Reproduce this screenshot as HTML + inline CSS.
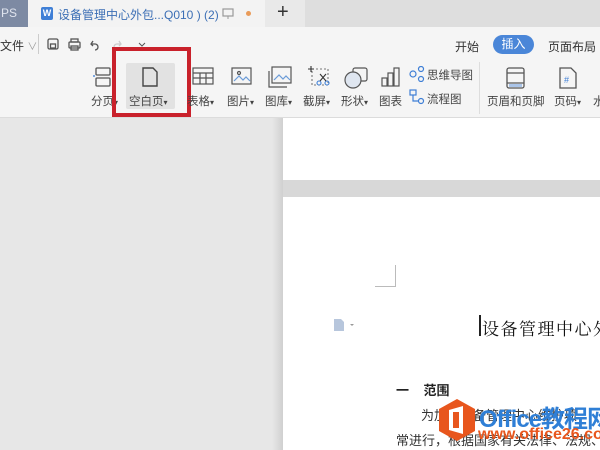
<!DOCTYPE html>
<html><head><meta charset="utf-8"><style>
*{margin:0;padding:0;box-sizing:border-box}
body{width:600px;height:450px;overflow:hidden;position:relative;background:#e7e7e7;font-family:"Liberation Sans","Noto Sans CJK SC",sans-serif;color:#444}
.a{position:absolute;white-space:nowrap}
.lbl{font-size:11.5px;color:#444}
.ic{position:absolute}
</style></head><body>
<div class="a" style="left:0;top:0;width:600px;height:27px;background:#dedede"></div>
<div class="a" style="left:0;top:0;width:28px;height:27px;background:#7d8aa3;color:#dfe4ee;font-size:12px;line-height:27px;padding-left:1px">PS</div>
<div class="a" style="left:28px;top:0;width:237px;height:27px;background:#f3f3f3"></div>
<div class="a" style="left:41px;top:7px;width:12px;height:13px;background:#3f7fd6;border-radius:2px;color:#fff;font-size:9px;line-height:13px;text-align:center;font-weight:bold">W</div>
<div class="a" style="left:58px;top:6px;font-size:12px;color:#3c6fb5">设备管理中心外包...Q010 ) (2)</div>
<svg class="ic" style="left:222px;top:8px" width="12" height="12"><rect x="1" y="1" width="10" height="7" fill="none" stroke="#999" stroke-width="1.2"/><line x1="6" y1="8" x2="6" y2="11" stroke="#999"/></svg>
<div class="a" style="left:246px;top:11px;width:5px;height:5px;border-radius:50%;background:#e99b59"></div>
<div class="a" style="left:265px;top:0;width:40px;height:27px;background:#e9e9e9"></div>
<div class="a" style="left:277px;top:1px;font-size:20px;color:#333">+</div>
<div class="a" style="left:0;top:27px;width:600px;height:91px;background:#f5f5f5;border-bottom:1px solid #dcdcdc"></div>
<div class="a" style="left:0;top:37px;font-size:12px;color:#333">文件 <span style="color:#999;font-size:10px">∨</span></div>
<div class="a" style="left:38px;top:34px;width:1px;height:20px;background:#ccc"></div>
<svg class="ic" style="left:46px;top:37px" width="100" height="14" fill="none" stroke="#555" stroke-width="1.3"><rect x="2" y="2" width="10" height="10" rx="1.5"/><rect x="4.5" y="7" width="5" height="4"/><rect x="23" y="5" width="11" height="6" rx="1"/><rect x="25" y="2" width="7" height="3"/><rect x="25" y="9" width="7" height="4"/><path d="M47 4l-2 3 2 2M45 7h4a3 3 0 1 1 0 6"/><path d="M73 4l2 3-2 2M75 7h-4a3 3 0 1 0 0 6" stroke="#ccc"/><path d="M93 6l3 3 3-3" stroke-width="1"/></svg>
<div class="a" style="left:455px;top:38px;font-size:12px;color:#333">开始</div>
<div class="a" style="left:493px;top:35px;width:41px;height:19px;border-radius:10px;background:#4a86d8;color:#fff;font-size:12px;line-height:19px;text-align:center">插入</div>
<div class="a" style="left:548px;top:38px;font-size:12px;color:#333">页面布局</div>
<svg class="ic" style="left:93px;top:66px" width="20" height="22" fill="none" stroke="#555" stroke-width="1.3"><rect x="3" y="2" width="14" height="7" rx="1"/><rect x="3" y="12" width="14" height="8" rx="1"/><path d="M0 10h2" stroke="#3f7fd6"/></svg>
<div class="a lbl" style="left:91px;top:93px">分页<span style="font-size:8px">▾</span></div>
<div class="a" style="left:126px;top:63px;width:49px;height:46px;background:#e2e2e2;border-radius:2px"></div>
<svg class="ic" style="left:141px;top:66px" width="18" height="22" fill="none" stroke="#444" stroke-width="1.4"><path d="M2 2h10l4 4v14H2z"/></svg>
<div class="a lbl" style="left:129px;top:93px">空白页<span style="font-size:8px">▾</span></div>
<div class="a" style="left:112px;top:47px;width:79px;height:70px;border:4px solid #c9212b"></div>
<svg class="ic" style="left:192px;top:66px" width="22" height="20" fill="none" stroke="#555" stroke-width="1.2"><rect x="1" y="2" width="20" height="16"/><path d="M1 7h20M1 12h20M8 7v11M14 7v11"/></svg>
<div class="a lbl" style="left:187px;top:93px">表格<span style="font-size:8px">▾</span></div>
<svg class="ic" style="left:231px;top:66px" width="22" height="20" fill="none" stroke="#555" stroke-width="1.2"><rect x="1" y="2" width="19" height="16"/><path d="M3 15l5-5 4 4 3-3 4 4" stroke="#6a9bd8"/><circle cx="8" cy="7" r="1.5"/></svg>
<div class="a lbl" style="left:227px;top:93px">图片<span style="font-size:8px">▾</span></div>
<svg class="ic" style="left:268px;top:66px" width="24" height="22" fill="none" stroke="#555" stroke-width="1.2"><rect x="4" y="1" width="19" height="16"/><path d="M1 5v16h18"/><path d="M6 14l5-5 4 4 3-3 4 4" stroke="#6a9bd8"/></svg>
<div class="a lbl" style="left:265px;top:93px">图库<span style="font-size:8px">▾</span></div>
<svg class="ic" style="left:307px;top:66px" width="24" height="22" fill="none" stroke="#777" stroke-width="1.1"><path d="M5 3h16v16H5z" stroke-dasharray="2 2"/><path d="M1 3h6M4 0v6" stroke="#333"/><circle cx="12" cy="17" r="2" stroke="#3f7fd6"/><circle cx="20" cy="17" r="2" stroke="#3f7fd6"/><path d="M13 15l6-7M19 15l-6-7" stroke="#333"/></svg>
<div class="a lbl" style="left:303px;top:93px">截屏<span style="font-size:8px">▾</span></div>
<svg class="ic" style="left:344px;top:66px" width="26" height="24" fill="none" stroke="#555" stroke-width="1.2"><rect x="9" y="2" width="14" height="13" rx="2"/><circle cx="9" cy="14" r="8" fill="#dfe6f0"/></svg>
<div class="a lbl" style="left:341px;top:93px">形状<span style="font-size:8px">▾</span></div>
<svg class="ic" style="left:380px;top:66px" width="22" height="22" fill="none" stroke="#555" stroke-width="1.2"><rect x="2" y="12" width="5" height="8"/><rect x="8" y="7" width="5" height="13"/><rect x="14" y="2" width="5" height="18"/></svg>
<div class="a lbl" style="left:379px;top:93px">图表</div>
<svg class="ic" style="left:409px;top:66px" width="16" height="16" fill="none" stroke="#3f7fd6" stroke-width="1.2"><circle cx="4" cy="8" r="3"/><circle cx="12" cy="3" r="2.5"/><circle cx="12" cy="13" r="2.5"/></svg>
<div class="a lbl" style="left:427px;top:67px">思维导图</div>
<svg class="ic" style="left:409px;top:89px" width="16" height="16" fill="none" stroke="#3f7fd6" stroke-width="1.2"><rect x="1" y="1" width="6" height="5"/><path d="M4 6v6h6"/><circle cx="12" cy="12" r="2.5"/></svg>
<div class="a lbl" style="left:427px;top:91px">流程图</div>
<div class="a" style="left:479px;top:62px;width:1px;height:52px;background:#ddd"></div>
<svg class="ic" style="left:505px;top:66px" width="22" height="24" fill="none" stroke="#555" stroke-width="1.3"><rect x="2" y="2" width="17" height="20" rx="2"/><path d="M2 7h17M2 17h17"/><rect x="4" y="18" width="13" height="3" fill="#aac4e8" stroke="none"/></svg>
<div class="a lbl" style="left:487px;top:93px">页眉和页脚</div>
<svg class="ic" style="left:558px;top:66px" width="20" height="24" fill="none" stroke="#555" stroke-width="1.3"><path d="M2 2h11l5 5v15H2z"/><text x="6" y="17" font-size="9" fill="#3f7fd6" stroke="none" font-family="Liberation Sans">#</text></svg>
<div class="a lbl" style="left:554px;top:93px">页码<span style="font-size:8px">▾</span></div>
<div class="a lbl" style="left:593px;top:93px">水</div>
<div class="a" style="left:272px;top:118px;width:328px;height:332px;background:linear-gradient(to right,#e7e7e7,#d0d0d0 11px)"></div>
<div class="a" style="left:283px;top:180px;width:317px;height:17px;background:#d8d8d8"></div>
<div class="a" style="left:283px;top:118px;width:317px;height:62px;background:#fff"></div>
<div class="a" style="left:283px;top:197px;width:317px;height:253px;background:#fff"></div>
<div class="a" style="left:375px;top:265px;width:21px;height:22px;border-right:1px solid #bbb;border-bottom:1px solid #bbb"></div>
<svg class="ic" style="left:333px;top:318px" width="24" height="14"><path d="M1 1h7l3 3v9H1z" fill="#b7c6dc"/><path d="M17 6l2 2 2-2" fill="#999"/></svg>
<div class="a" style="left:479px;top:315px;width:2px;height:21px;background:#222"></div>
<div class="a" style="left:482px;top:315px;font-family:'Noto Serif CJK SC','Liberation Serif',serif;font-size:17px;color:#111;letter-spacing:1.5px">设备管理中心外</div>
<div class="a" style="left:396px;top:380px;font-size:13px;color:#222;font-weight:bold">一&nbsp;&nbsp;&nbsp;&nbsp;范围</div>
<div class="a" style="left:421px;top:405px;font-size:13px;color:#333">为加强设备管理中心维护项</div>
<div class="a" style="left:396px;top:430px;font-size:13px;color:#333">常进行，根据国家有关法律、法规、</div>
<svg class="ic" style="left:437px;top:398px" width="40" height="44"><path d="M20 1l18 10v22L20 43 2 33V11z" fill="#e8561d"/><path d="M12 12l14-4v28l-14-4z" fill="#fff"/><rect x="16" y="14" width="6" height="16" fill="#e8561d"/></svg>
<div class="a" style="left:479px;top:399px;font-size:24px;font-weight:bold;color:#2f7fd6;letter-spacing:-1px">Office教程网</div>
<div class="a" style="left:478px;top:426px;font-size:16px;font-weight:bold;color:#e8561d">www.office26.com</div>
</body></html>
